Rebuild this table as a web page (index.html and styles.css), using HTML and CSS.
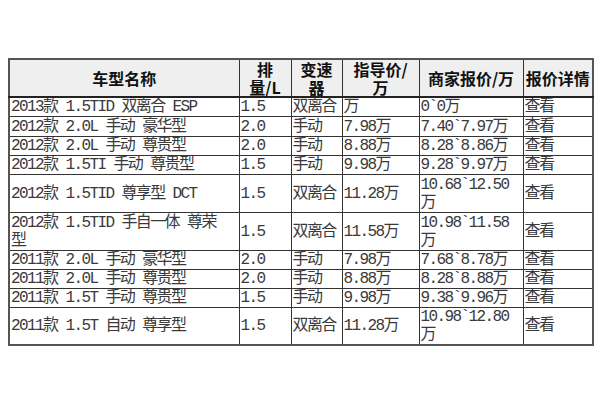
FILE: index.html
```html
<!DOCTYPE html>
<html lang="zh-CN">
<head>
<meta charset="utf-8">
<title>车型报价</title>
<link rel="stylesheet" href="styles.css">
</head>
<body>
<div class="page">
<table class="price-table">
<colgroup>
<col class="c-name"><col class="c-disp"><col class="c-gear"><col class="c-guide"><col class="c-dealer"><col class="c-detail">
</colgroup>
<thead>
<tr class="head">
<th>车型名称</th><th><span class="hl">排</span><span class="hl">量/L</span></th><th><span class="hl">变速</span><span class="hl">器</span></th><th><span class="hl">指导价/</span><span class="hl">万</span></th><th>商家报价/万</th><th>报价详情</th>
</tr>
</thead>
<tbody>
<tr class="r19"><td>2013款 1.5TID 双离合 ESP</td><td>1.5</td><td>双离合</td><td>万</td><td>0`0万</td><td>查看</td></tr>
<tr class="r20"><td>2012款 2.0L 手动 豪华型</td><td>2.0</td><td>手动</td><td>7.98万</td><td>7.40`7.97万</td><td>查看</td></tr>
<tr class="r18"><td>2012款 2.0L 手动 尊贵型</td><td>2.0</td><td>手动</td><td>8.88万</td><td>8.28`8.86万</td><td>查看</td></tr>
<tr class="r19"><td>2012款 1.5TI 手动 尊贵型</td><td>1.5</td><td>手动</td><td>9.98万</td><td>9.28`9.97万</td><td>查看</td></tr>
<tr class="r38"><td>2012款 1.5TID 尊享型 DCT</td><td>1.5</td><td>双离合</td><td>11.28万</td><td>10.68`12.50<br>万</td><td>查看</td></tr>
<tr class="r38"><td>2012款 1.5TID 手自一体 尊荣<br>型</td><td>1.5</td><td>双离合</td><td>11.58万</td><td>10.98`11.58<br>万</td><td>查看</td></tr>
<tr class="r18"><td>2011款 2.0L 手动 豪华型</td><td>2.0</td><td>手动</td><td>7.98万</td><td>7.68`8.78万</td><td>查看</td></tr>
<tr class="r19"><td>2011款 2.0L 手动 尊贵型</td><td>2.0</td><td>手动</td><td>8.88万</td><td>8.28`8.88万</td><td>查看</td></tr>
<tr class="r19"><td>2011款 1.5T 手动 尊贵型</td><td>1.5</td><td>手动</td><td>9.98万</td><td>9.38`9.96万</td><td>查看</td></tr>
<tr class="r37"><td>2011款 1.5T 自动 尊享型</td><td>1.5</td><td>双离合</td><td>11.28万</td><td>10.98`12.80<br>万</td><td>查看</td></tr>
</tbody>
</table>
</div>
</body>
</html>
```
FILE: styles.css
```css
html, body {
  margin: 0;
  padding: 0;
  background: #ffffff;
}

.page {
  padding: 58px 0 0 8px;
}

.price-table {
  border-collapse: collapse;
  table-layout: fixed;
  width: 584px;
  border: 2px solid #555555;
}

.c-name { width: 230px; }
.c-disp { width: 52px; }
.c-gear { width: 51px; }
.c-guide { width: 77px; }
.c-dealer { width: 104px; }
.c-detail { width: 70px; }

.price-table th,
.price-table td {
  border: 1px solid #333333;
  padding: 0 0 0 1px;
  vertical-align: middle;
  white-space: nowrap;
}

.price-table td {
  overflow: hidden;
}

.head th {
  height: 36px;
  padding: 0;
  background: #efefef;
  font-family: "Noto Sans CJK SC", "Liberation Sans", sans-serif;
  font-weight: 700;
  font-size: 16px;
  line-height: 18px;
  color: #111111;
  text-align: center;
  border-bottom: 2px solid #222222;
}

.hl {
  display: block;
  height: 18px;
  line-height: 18px;
}

.price-table td {
  font-family: "Liberation Mono", "Noto Sans CJK SC", monospace;
  font-size: 16px;
  line-height: 18px;
  letter-spacing: -1.6px;
  color: #3a3a3a;
  text-align: left;
}

.r18 td { height: 17px; }
.r19 td { height: 18px; }
.r20 td { height: 19px; }
.r37 td { height: 36px; }
.r38 td { height: 37px; }
```
